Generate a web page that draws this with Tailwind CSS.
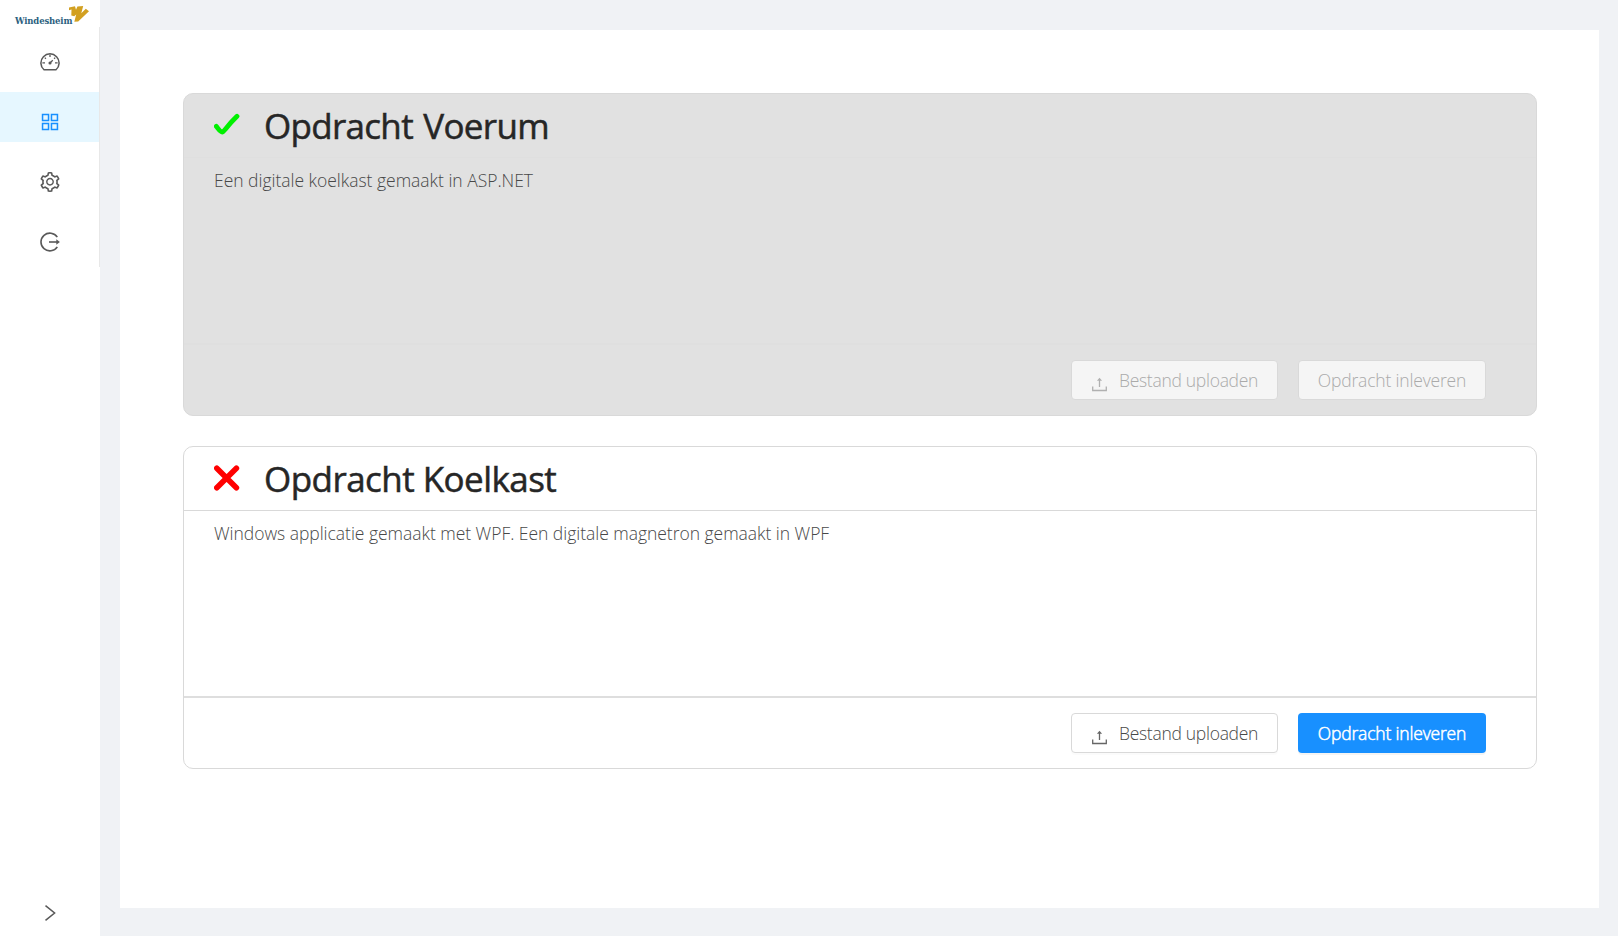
<!DOCTYPE html>
<html lang="nl">
<head>
<meta charset="utf-8">
<title>Opdrachten</title>
<script src="https://cdn.jsdelivr.net/npm/@tailwindcss/browser@4"></script>
</head>
<body class="flex h-screen overflow-hidden bg-[#f0f2f5] font-['Open_Sans',sans-serif] text-black/65">
<aside class="flex w-[100px] shrink-0 flex-col bg-white text-[#595959]">
  <div class="flex h-[27px] items-start pt-[5px] pl-[15px]">
    <span class="mt-[8.5px] w-[55px] whitespace-nowrap font-['DejaVu_Serif',serif] text-[8.5px] leading-[14px] font-bold tracking-[-0.15px] text-[#2c5f80]">Windesheim</span>
    <svg class="-ml-px h-[18px] w-5 shrink-0" viewBox="0 0 20 18" fill="#d2a021"><path d="M0 2.500 6 1.200 7 4.800 8.400 1.600 14.200 1 12.300 8.200 16.800 3.800 20 6.200 9.200 16.600 5.300 16.800 7.200 9.500 5.200 11.200 2.300 10.600 2.500 4.600 0 5.200Z"/></svg>
  </div>
  <nav class="flex h-60 flex-col gap-2.5 border-r border-[#e8e8e8] py-[5px]">
    <a class="flex h-[50px] items-center justify-center pt-2.5 pl-px">
      <svg class="size-5" viewBox="0 0 20 20" fill="none" stroke="currentColor" stroke-width="1.5" stroke-linejoin="round"><path d="M4 17.800A9.100 9.100 0 1 1 16 17.800Z"/><path d="M10 2.400v2.600M2.400 10.900H5M15 10.900h2.600M4.800 5.600l1.100 1.100M15.200 5.600l-1.100 1.100M10.200 10.800l2.600-2.600" stroke-width="1.3"/><circle cx="10" cy="11" r=".8" fill="currentColor"/></svg>
    </a>
    <a class="flex h-[50px] items-center justify-center bg-[#e6f7ff] pt-2.5 pl-px text-[#1890ff]">
      <svg class="size-5" viewBox="64 64 896 896" fill="none" stroke="currentColor" stroke-width="68"><path d="M178 178h268v268H178zM578 178h268v268H578zM178 578h268v268H178zM578 578h268v268H578z"/></svg>
    </a>
    <a class="flex h-[50px] items-center justify-center pt-2.5 pl-px">
      <svg class="size-5" viewBox="64 64 896 896" fill="currentColor"><path d="M924.800 625.700l-65.500-56c3.100-19 4.700-38.400 4.700-57.800s-1.600-38.800-4.700-57.800l65.500-56a32.030 32.030 0 0 0 9.300-35.200l-.9-2.600a443.740 443.740 0 0 0-79.700-137.900l-1.800-2.100a32.120 32.120 0 0 0-35.100-9.500l-81.300 28.900c-30-24.600-63.500-44-99.700-57.600l-15.700-85a32.050 32.050 0 0 0-25.800-25.700l-2.700-.5c-52.100-9.400-106.900-9.400-159 0l-2.700.5a32.050 32.050 0 0 0-25.800 25.700l-15.800 85.400a351.860 351.860 0 0 0-99 57.400l-81.900-29.100a32 32 0 0 0-35.100 9.500l-1.800 2.100a446.020 446.020 0 0 0-79.700 137.900l-.9 2.600c-4.500 12.500-.8 26.500 9.300 35.200l66.300 56.600c-3.100 18.800-4.600 38-4.600 57.100 0 19.200 1.500 38.400 4.600 57.100L99 625.500a32.030 32.030 0 0 0-9.300 35.200l.9 2.600c18.100 50.400 44.900 96.900 79.700 137.900l1.800 2.100a32.120 32.120 0 0 0 35.100 9.500l81.900-29.100c29.800 24.500 63.100 43.900 99 57.400l15.800 85.400a32.050 32.050 0 0 0 25.800 25.700l2.700.5a449.400 449.400 0 0 0 159 0l2.700-.5a32.050 32.050 0 0 0 25.800-25.700l15.700-85a350 350 0 0 0 99.700-57.600l81.300 28.900a32 32 0 0 0 35.100-9.500l1.800-2.100c34.800-41.100 61.600-87.500 79.700-137.900l.9-2.600c4.500-12.300.8-26.300-9.300-35zM788.300 465.900c2.500 15.100 3.800 30.600 3.800 46.100s-1.300 31-3.800 46.100l-6.600 40.100 74.700 63.900a370.030 370.030 0 0 1-42.600 73.600L721 702.800l-31.400 25.800c-23.900 19.600-50.500 35-79.300 45.800l-38.100 14.300-17.900 97a377.500 377.500 0 0 1-85 0l-17.900-97.200-37.800-14.500c-28.500-10.800-55-26.200-78.700-45.700l-31.400-25.900-93.400 33.200c-17-22.900-31.200-47.600-42.600-73.600l75.500-64.500-6.500-40c-2.400-14.900-3.700-30.300-3.700-45.500 0-15.300 1.200-30.600 3.700-45.500l6.500-40-75.500-64.500c11.300-26.100 25.600-50.700 42.600-73.600l93.400 33.200 31.400-25.900c23.700-19.500 50.200-34.900 78.700-45.700l37.900-14.300 17.900-97.200c28.100-3.200 56.800-3.200 85 0l17.900 97 38.100 14.300c28.700 10.800 55.400 26.200 79.300 45.800l31.400 25.800 92.800-32.900c17 22.900 31.200 47.600 42.600 73.600L781.800 426l6.500 39.900zM512 326c-97.200 0-176 78.800-176 176s78.800 176 176 176 176-78.800 176-176-78.800-176-176-176zm79.200 255.200A111.600 111.600 0 0 1 512 614c-29.900 0-58-11.700-79.200-32.800A111.600 111.600 0 0 1 400 502c0-29.900 11.700-58 32.800-79.200C454 401.600 482.100 390 512 390c29.900 0 58 11.600 79.200 32.800A111.600 111.600 0 0 1 624 502c0 29.900-11.700 58-32.800 79.200z"/></svg>
    </a>
    <a class="flex h-[50px] items-center justify-center pt-2.5 pl-px">
      <svg class="size-5" viewBox="0 0 20 20" fill="none" stroke="currentColor" stroke-width="1.6"><path d="M17.300 5.100A8.900 8.900 0 1 0 17.300 14.900"/><path d="M9 10h8"/><path d="M16.300 7.300v5.400L19.900 10Z" fill="currentColor" stroke="none"/></svg>
    </a>
  </nav>
  <div class="mt-auto flex h-12 items-center justify-center">
    <svg class="mt-px size-5" viewBox="0 0 20 20" fill="none" stroke="currentColor" stroke-width="1.5"><path d="M5.500 2.700 14.600 10 5.500 17.300"/></svg>
  </div>
</aside>
<main class="mt-[30px] ml-5 flex h-[878px] w-[1479px] flex-col gap-[30px] bg-white px-[63px] pt-[63px]">
  <section class="flex h-[323px] w-[1354px] shrink-0 flex-col rounded-[10px] border border-[#d9d9d9] bg-[#e1e1e1]">
    <header class="flex h-16 shrink-0 items-center border-b border-[#dfdfdf] pl-[30px]">
      <svg class="-mt-px h-[26px] w-[26px]" viewBox="0 0 26 26" fill="none" stroke="#00f000" stroke-width="4.800" stroke-linecap="round" stroke-linejoin="round"><path d="M2.300 14.400C4 16.300 6 20 8.200 20C10 20 12 15 23 4.300"/></svg>
      <h1 class="ml-6 whitespace-nowrap text-[35px] leading-[48px] font-medium tracking-[-0.7px] [word-spacing:2px] text-[#262626] [-webkit-text-stroke:0.5px_#262626]">Opdracht Voerum</h1>
    </header>
    <p class="h-[185px] whitespace-nowrap pt-[9px] pl-[30px] text-[17.5px] leading-[27px] font-light tracking-[-0.02px] text-[#484848]">Een digitale koelkast gemaakt in ASP.NET</p>
    <footer class="flex grow justify-end gap-5 border-t-2 border-[#dfdfdf] pt-[15px] pr-[50px]">
      <button class="flex h-10 w-[207px] items-center rounded border border-[#d9d9d9] bg-[#f5f5f5] pl-5 text-[17.5px] font-light tracking-[-0.29px] whitespace-nowrap text-[#aaa]">
        <svg class="mt-2 h-4 w-4" viewBox="0 0 16 16" fill="none" stroke="#b0b0b0" stroke-width="1.300"><path d="M.7 10.500v4h13.600v-4M7.500 11V3.500"/><path d="M4.900 4.800 7.500 1.800l2.600 3Z" fill="#b0b0b0" stroke="none"/></svg>
        <span class="ml-[11px]">Bestand uploaden</span>
      </button>
      <button class="h-10 w-[188px] rounded border border-[#d9d9d9] bg-[#f5f5f5] text-[17.5px] font-light tracking-[-0.18px] whitespace-nowrap text-[#aaa]">Opdracht inleveren</button>
    </footer>
  </section>
  <section class="flex h-[323px] w-[1354px] shrink-0 flex-col rounded-[10px] border border-[#d9d9d9] bg-white">
    <header class="flex h-16 shrink-0 items-center border-b border-[#d9d9d9] pl-[30px]">
      <svg class="-mt-px h-[26px] w-[26px]" viewBox="0 0 26 26" fill="none" stroke="#f00" stroke-width="5.600" stroke-linecap="round"><path d="M2.800 3.200 22.400 22.800M22.400 3.200 2.800 22.800"/></svg>
      <h1 class="ml-6 whitespace-nowrap text-[35px] leading-[48px] font-medium tracking-[-0.55px] text-[#262626] [-webkit-text-stroke:0.5px_#262626]">Opdracht Koelkast</h1>
    </header>
    <p class="h-[185px] whitespace-nowrap pt-[9px] pl-[30px] text-[17.5px] leading-[27px] font-light tracking-[-0.03px] text-[#484848]">Windows applicatie gemaakt met WPF. Een digitale magnetron gemaakt in WPF</p>
    <footer class="flex grow justify-end gap-5 border-t-2 border-[#dedede] pt-[15px] pr-[50px]">
      <button class="flex h-10 w-[207px] items-center rounded border border-[#d9d9d9] bg-white pl-5 text-[17.5px] font-light tracking-[-0.29px] whitespace-nowrap text-[#484848] shadow-[0_2px_0_rgba(0,0,0,0.015)]">
        <svg class="mt-2 h-4 w-4" viewBox="0 0 16 16" fill="none" stroke="#666" stroke-width="1.300"><path d="M.7 10.500v4h13.600v-4M7.500 11V3.500"/><path d="M4.900 4.800 7.500 1.800l2.600 3Z" fill="#666" stroke="none"/></svg>
        <span class="ml-[11px]">Bestand uploaden</span>
      </button>
      <button class="h-10 w-[188px] rounded bg-[#1890ff] text-[17.5px] font-light tracking-[-0.18px] whitespace-nowrap text-white shadow-[0_2px_0_rgba(0,0,0,0.045)] [-webkit-text-stroke:0.5px_white]">Opdracht inleveren</button>
    </footer>
  </section>
</main>
</body>
</html>
